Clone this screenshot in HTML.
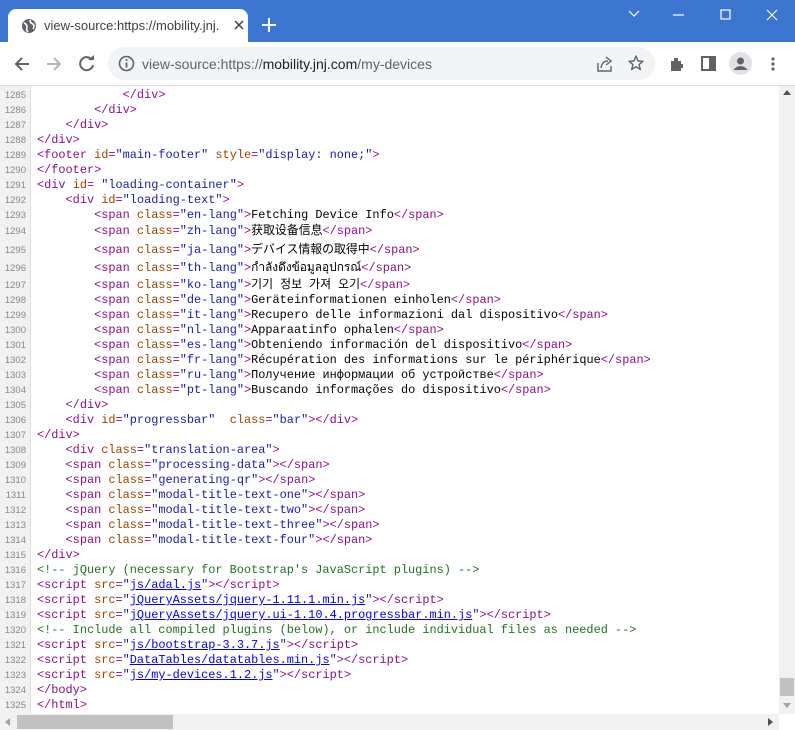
<!DOCTYPE html>
<html><head><meta charset="utf-8"><style>
*{margin:0;padding:0;box-sizing:border-box}
body{width:795px;height:730px;overflow:hidden;background:#fff;position:relative;font-family:"Liberation Sans",sans-serif}
.top{position:absolute;left:0;top:0;width:795px;height:42px;background:#3c75cf}
.tab{position:absolute;left:8px;top:9px;width:240px;height:33px;background:#fff;border-radius:8px 8px 0 0}
.tab .t{position:absolute;left:36px;top:9px;font-size:13px;color:#3c4043;white-space:nowrap;width:175px;overflow:hidden}
.tool{position:absolute;left:0;top:42px;width:795px;height:44px;background:#fff;border-bottom:1px solid #dadce0}
.omni{position:absolute;left:108px;top:5px;width:547px;height:33px;background:#f1f3f4;border-radius:17px}
.omni .u{position:absolute;left:34px;top:9px;font-size:14px;color:#5f6368}
.code{position:absolute;left:0;top:86px;width:779px;height:628px;overflow:hidden}
.gut{position:absolute;left:0;top:0;width:31px;height:628px;background:#f1f1f1;border-right:1px solid #ddd}
.l{position:absolute;left:0;height:15px;white-space:pre;font-family:"Liberation Mono","Noto Sans CJK JP","Noto Sans CJK KR",monospace;font-size:11.9px;line-height:15px;color:#000}
.n{position:absolute;left:0;width:26px;text-align:right;font-size:9.5px;color:#888;font-family:"Liberation Sans",sans-serif}
.c{position:absolute;left:37px}
.g{color:#881280}.a{color:#994500}.v{color:#1a1aa6}.m{color:#236e25}.k{color:#1a1aa6;text-decoration:underline;color:#0000ee}
.vs{position:absolute;left:779px;top:86px;width:16px;height:628px;background:#f1f1f1}
.hs{position:absolute;left:0;top:714px;width:779px;height:16px;background:#f1f1f1}
</style></head><body>
<div class="top">
<div class="tab">
<svg style="position:absolute;left:13px;top:9px" width="16" height="16" viewBox="0 0 16 16"><circle cx="8" cy="8" r="7" fill="#5f6368"/><path d="M3 5 Q6 6 6 9 Q5 12 7 14 M9 2 Q9 5 12 6 Q14 8 12 11" stroke="#fff" stroke-width="1.6" fill="none"/></svg>
<div class="t">view-source:https://mobility.jnj.c</div>
<svg style="position:absolute;left:226px;top:11px" width="10" height="10"><path d="M1 1L9 9M9 1L1 9" stroke="#3c4043" stroke-width="1.5"/></svg>
</div>
<svg style="position:absolute;left:262px;top:18px" width="14" height="14"><path d="M7 0V14M0 7H14" stroke="#fff" stroke-width="2"/></svg>
<svg style="position:absolute;left:628px;top:10px" width="12" height="8"><path d="M1 1L6 6L11 1" stroke="#fff" stroke-width="1.2" fill="none"/></svg>
<svg style="position:absolute;left:673px;top:14px" width="12" height="2"><path d="M0 1H11" stroke="#fff" stroke-width="1.2"/></svg>
<svg style="position:absolute;left:720px;top:9px" width="12" height="12"><rect x="1" y="1" width="9" height="9" fill="none" stroke="#fff" stroke-width="1.2"/></svg>
<svg style="position:absolute;left:766px;top:9px" width="12" height="12"><path d="M1 1L11 11M11 1L1 11" stroke="#fff" stroke-width="1.2"/></svg>
</div>
<div class="tool">
<svg style="position:absolute;left:13px;top:13px" width="18" height="18"><path d="M16 9H3M9 3L3 9L9 15" stroke="#5f6368" stroke-width="2" fill="none"/></svg>
<svg style="position:absolute;left:45px;top:13px" width="18" height="18"><path d="M2 9H15M9 3L15 9L9 15" stroke="#b5b5b5" stroke-width="2" fill="none"/></svg>
<svg style="position:absolute;left:78px;top:13px" width="18" height="18"><path d="M14 5A6.5 6.5 0 1 0 15 10" stroke="#5f6368" stroke-width="2" fill="none"/><path d="M10 5H16V0Z" fill="#5f6368"/></svg>
<div class="omni">
<svg style="position:absolute;left:10px;top:8px" width="17" height="17"><circle cx="8.5" cy="8.5" r="7" stroke="#5f6368" stroke-width="1.6" fill="none"/><path d="M8.5 7.5V12.5" stroke="#5f6368" stroke-width="1.8"/><circle cx="8.5" cy="5" r="1" fill="#5f6368"/></svg>
<div class="u">view-source:https://<span style="color:#202124">mobility.jnj.com</span>/my-devices</div>
<svg style="position:absolute;left:489px;top:9px" width="16" height="16"><path d="M1 7V15H14V10" stroke="#5f6368" stroke-width="1.4" fill="none"/><path d="M4 12Q5 5 11 5M9 1L14 5L9 9" stroke="#5f6368" stroke-width="1.4" fill="none"/></svg>
<svg style="position:absolute;left:520px;top:8px" width="16" height="16"><path d="M8 1L10 6L15 6.3L11 9.5L12.4 14.6L8 11.7L3.6 14.6L5 9.5L1 6.3L6 6Z" stroke="#5f6368" stroke-width="1.4" fill="none" stroke-linejoin="round"/></svg>
</div>
<svg style="position:absolute;left:669px;top:14px" width="16" height="16"><path d="M2 5H5V2H9V5H12V8H14V12H12V15H2Z" fill="#5f6368"/></svg>
<svg style="position:absolute;left:701px;top:14px" width="16" height="16"><rect x="1" y="1" width="13" height="13" fill="none" stroke="#5f6368" stroke-width="2"/><rect x="8" y="1" width="6" height="13" fill="#5f6368"/></svg>
<svg style="position:absolute;left:729px;top:10px" width="23" height="23"><circle cx="11.5" cy="11.5" r="11.5" fill="#e0e2e5"/><circle cx="11.5" cy="9" r="3.5" fill="#5f6368"/><path d="M5 17Q11.5 11 18 17V18H5Z" fill="#5f6368"/></svg>
<svg style="position:absolute;left:770px;top:14px" width="6" height="16"><circle cx="3" cy="3" r="1.6" fill="#5f6368"/><circle cx="3" cy="8" r="1.6" fill="#5f6368"/><circle cx="3" cy="13" r="1.6" fill="#5f6368"/></svg>
</div>
<div class="code"><div class="gut"></div>
<div class="l" style="top:-13px"><span class="c">            <span class="v">"</span>          </span></div>
<div class="l" style="top:2px"><span class="n">1285</span><span class="c">            <span class="g">&lt;/div&gt;</span></span></div>
<div class="l" style="top:17px"><span class="n">1286</span><span class="c">        <span class="g">&lt;/div&gt;</span></span></div>
<div class="l" style="top:32px"><span class="n">1287</span><span class="c">    <span class="g">&lt;/div&gt;</span></span></div>
<div class="l" style="top:47px"><span class="n">1288</span><span class="c"><span class="g">&lt;/div&gt;</span></span></div>
<div class="l" style="top:62px"><span class="n">1289</span><span class="c"><span class="g">&lt;footer <span class="a">id</span>=<span class="v">"main-footer"</span> <span class="a">style</span>=<span class="v">"display: none;"</span>&gt;</span></span></div>
<div class="l" style="top:77px"><span class="n">1290</span><span class="c"><span class="g">&lt;/footer&gt;</span></span></div>
<div class="l" style="top:92px"><span class="n">1291</span><span class="c"><span class="g">&lt;div <span class="a">id</span>= <span class="v">"loading-container"</span>&gt;</span></span></div>
<div class="l" style="top:107px"><span class="n">1292</span><span class="c">    <span class="g">&lt;div <span class="a">id</span>=<span class="v">"loading-text"</span>&gt;</span></span></div>
<div class="l" style="top:122px"><span class="n">1293</span><span class="c">        <span class="g">&lt;span <span class="a">class</span>=<span class="v">"en-lang"</span>&gt;</span>Fetching Device Info<span class="g">&lt;/span&gt;</span></span></div>
<div class="l" style="top:138px"><span class="n">1294</span><span class="c">        <span class="g">&lt;span <span class="a">class</span>=<span class="v">"zh-lang"</span>&gt;</span>获取设备信息<span class="g">&lt;/span&gt;</span></span></div>
<div class="l" style="top:157px"><span class="n">1295</span><span class="c">        <span class="g">&lt;span <span class="a">class</span>=<span class="v">"ja-lang"</span>&gt;</span>デバイス情報の取得中<span class="g">&lt;/span&gt;</span></span></div>
<div class="l" style="top:175px"><span class="n">1296</span><span class="c">        <span class="g">&lt;span <span class="a">class</span>=<span class="v">"th-lang"</span>&gt;</span>กำลังดึงข้อมูลอุปกรณ์<span class="g">&lt;/span&gt;</span></span></div>
<div class="l" style="top:192px"><span class="n">1297</span><span class="c">        <span class="g">&lt;span <span class="a">class</span>=<span class="v">"ko-lang"</span>&gt;</span>기기 정보 가져 오기<span class="g">&lt;/span&gt;</span></span></div>
<div class="l" style="top:207px"><span class="n">1298</span><span class="c">        <span class="g">&lt;span <span class="a">class</span>=<span class="v">"de-lang"</span>&gt;</span>Geräteinformationen einholen<span class="g">&lt;/span&gt;</span></span></div>
<div class="l" style="top:222px"><span class="n">1299</span><span class="c">        <span class="g">&lt;span <span class="a">class</span>=<span class="v">"it-lang"</span>&gt;</span>Recupero delle informazioni dal dispositivo<span class="g">&lt;/span&gt;</span></span></div>
<div class="l" style="top:237px"><span class="n">1300</span><span class="c">        <span class="g">&lt;span <span class="a">class</span>=<span class="v">"nl-lang"</span>&gt;</span>Apparaatinfo ophalen<span class="g">&lt;/span&gt;</span></span></div>
<div class="l" style="top:252px"><span class="n">1301</span><span class="c">        <span class="g">&lt;span <span class="a">class</span>=<span class="v">"es-lang"</span>&gt;</span>Obteniendo información del dispositivo<span class="g">&lt;/span&gt;</span></span></div>
<div class="l" style="top:267px"><span class="n">1302</span><span class="c">        <span class="g">&lt;span <span class="a">class</span>=<span class="v">"fr-lang"</span>&gt;</span>Récupération des informations sur le périphérique<span class="g">&lt;/span&gt;</span></span></div>
<div class="l" style="top:282px"><span class="n">1303</span><span class="c">        <span class="g">&lt;span <span class="a">class</span>=<span class="v">"ru-lang"</span>&gt;</span>Получение информации об устройстве<span class="g">&lt;/span&gt;</span></span></div>
<div class="l" style="top:297px"><span class="n">1304</span><span class="c">        <span class="g">&lt;span <span class="a">class</span>=<span class="v">"pt-lang"</span>&gt;</span>Buscando informações do dispositivo<span class="g">&lt;/span&gt;</span></span></div>
<div class="l" style="top:312px"><span class="n">1305</span><span class="c">    <span class="g">&lt;/div&gt;</span></span></div>
<div class="l" style="top:327px"><span class="n">1306</span><span class="c">    <span class="g">&lt;div <span class="a">id</span>=<span class="v">"progressbar"</span>  <span class="a">class</span>=<span class="v">"bar"</span>&gt;&lt;/div&gt;</span></span></div>
<div class="l" style="top:342px"><span class="n">1307</span><span class="c"><span class="g">&lt;/div&gt;</span></span></div>
<div class="l" style="top:357px"><span class="n">1308</span><span class="c">    <span class="g">&lt;div <span class="a">class</span>=<span class="v">"translation-area"</span>&gt;</span></span></div>
<div class="l" style="top:372px"><span class="n">1309</span><span class="c">    <span class="g">&lt;span <span class="a">class</span>=<span class="v">"processing-data"</span>&gt;&lt;/span&gt;</span></span></div>
<div class="l" style="top:387px"><span class="n">1310</span><span class="c">    <span class="g">&lt;span <span class="a">class</span>=<span class="v">"generating-qr"</span>&gt;&lt;/span&gt;</span></span></div>
<div class="l" style="top:402px"><span class="n">1311</span><span class="c">    <span class="g">&lt;span <span class="a">class</span>=<span class="v">"modal-title-text-one"</span>&gt;&lt;/span&gt;</span></span></div>
<div class="l" style="top:417px"><span class="n">1312</span><span class="c">    <span class="g">&lt;span <span class="a">class</span>=<span class="v">"modal-title-text-two"</span>&gt;&lt;/span&gt;</span></span></div>
<div class="l" style="top:432px"><span class="n">1313</span><span class="c">    <span class="g">&lt;span <span class="a">class</span>=<span class="v">"modal-title-text-three"</span>&gt;&lt;/span&gt;</span></span></div>
<div class="l" style="top:447px"><span class="n">1314</span><span class="c">    <span class="g">&lt;span <span class="a">class</span>=<span class="v">"modal-title-text-four"</span>&gt;&lt;/span&gt;</span></span></div>
<div class="l" style="top:462px"><span class="n">1315</span><span class="c"><span class="g">&lt;/div&gt;</span></span></div>
<div class="l" style="top:477px"><span class="n">1316</span><span class="c"><span class="m">&lt;!-- jQuery (necessary for Bootstrap's JavaScript plugins) --&gt;</span></span></div>
<div class="l" style="top:492px"><span class="n">1317</span><span class="c"><span class="g">&lt;script <span class="a">src</span>=<span class="v">"<span class="k">js/adal.js</span>"</span>&gt;&lt;/script&gt;</span></span></div>
<div class="l" style="top:507px"><span class="n">1318</span><span class="c"><span class="g">&lt;script <span class="a">src</span>=<span class="v">"<span class="k">jQueryAssets/jquery-1.11.1.min.js</span>"</span>&gt;&lt;/script&gt;</span></span></div>
<div class="l" style="top:522px"><span class="n">1319</span><span class="c"><span class="g">&lt;script <span class="a">src</span>=<span class="v">"<span class="k">jQueryAssets/jquery.ui-1.10.4.progressbar.min.js</span>"</span>&gt;&lt;/script&gt;</span></span></div>
<div class="l" style="top:537px"><span class="n">1320</span><span class="c"><span class="m">&lt;!-- Include all compiled plugins (below), or include individual files as needed --&gt;</span></span></div>
<div class="l" style="top:552px"><span class="n">1321</span><span class="c"><span class="g">&lt;script <span class="a">src</span>=<span class="v">"<span class="k">js/bootstrap-3.3.7.js</span>"</span>&gt;&lt;/script&gt;</span></span></div>
<div class="l" style="top:567px"><span class="n">1322</span><span class="c"><span class="g">&lt;script <span class="a">src</span>=<span class="v">"<span class="k">DataTables/datatables.min.js</span>"</span>&gt;&lt;/script&gt;</span></span></div>
<div class="l" style="top:582px"><span class="n">1323</span><span class="c"><span class="g">&lt;script <span class="a">src</span>=<span class="v">"<span class="k">js/my-devices.1.2.js</span>"</span>&gt;&lt;/script&gt;</span></span></div>
<div class="l" style="top:597px"><span class="n">1324</span><span class="c"><span class="g">&lt;/body&gt;</span></span></div>
<div class="l" style="top:612px"><span class="n">1325</span><span class="c"><span class="g">&lt;/html&gt;</span></span></div>
</div>
<div class="vs"><svg style="position:absolute;left:4px;top:4px" width="8" height="5"><path d="M0 5L4 0L8 5Z" fill="#505050"/></svg><div style="position:absolute;left:1px;top:592px;width:14px;height:18px;background:#c1c1c1"></div><svg style="position:absolute;left:4px;top:617px" width="8" height="5"><path d="M0 0L4 5L8 0Z" fill="#a3a3a3"/></svg></div>
<div class="hs"><svg style="position:absolute;left:5px;top:4px" width="5" height="8"><path d="M5 0L0 4L5 8Z" fill="#a3a3a3"/></svg><div style="position:absolute;left:17px;top:1px;width:156px;height:14px;background:#c1c1c1"></div><svg style="position:absolute;left:768px;top:4px" width="5" height="8"><path d="M0 0L5 4L0 8Z" fill="#505050"/></svg></div>
</body></html>
